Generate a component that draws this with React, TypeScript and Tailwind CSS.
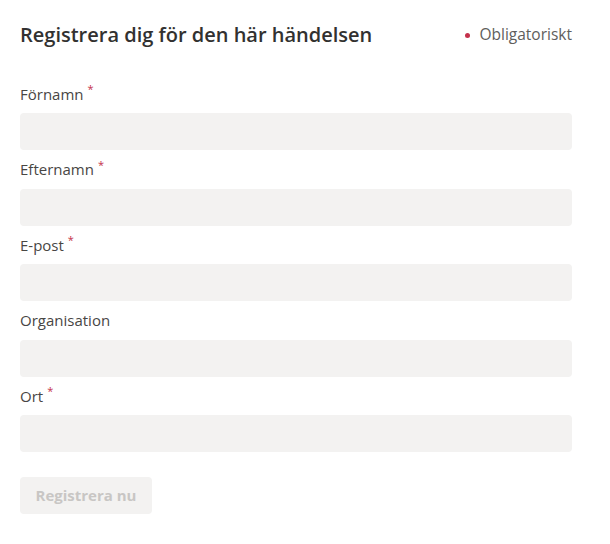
import React from 'react';

const fields = [
  { label: 'Förnamn', required: true },
  { label: 'Efternamn', required: true },
  { label: 'E-post', required: true },
  { label: 'Organisation', required: false },
  { label: 'Ort', required: true },
];

const App: React.FC = () => {
  return (
    <div className="w-[610px] h-[544px] bg-white pl-5 pr-[38px] pt-[21px] font-['Open_Sans',sans-serif] text-[#323130]">
      <div className="flex items-center justify-between h-[28px]">
        <h2 className="text-[20px] leading-[28px] font-semibold">Registrera dig för den här händelsen</h2>
        <div className="flex items-center text-[15.5px] text-[#605e5c]">
          <span className="w-[5px] h-[5px] rounded-full bg-[#c4314b] mr-[9px]"></span>
          Obligatoriskt
        </div>
      </div>

      <form className="mt-[35px] flex flex-col gap-[9.5px]">
        {fields.map((field, index) => (
          <div key={index}>
            <label className="flex h-[20px] items-center text-[15px] text-[#484644]">
              {field.label}
              {field.required && (
                <span className="ml-[4px] -mt-[9px] text-[11px] text-[#c4314b]">*</span>
              )}
            </label>
            <input
              type="text"
              className="mt-[9px] block w-full h-[37px] rounded-[4px] bg-[#f3f2f1] outline-none"
            />
          </div>
        ))}

        <div className="pt-[15.5px]">
          <button
            type="button"
            disabled
            className="h-[37px] w-[132px] rounded-[4px] bg-[#f3f2f1] text-[15px] font-bold text-[#c8c6c4]"
          >
            Registrera nu
          </button>
        </div>
      </form>
    </div>
  );
};

export default App;
